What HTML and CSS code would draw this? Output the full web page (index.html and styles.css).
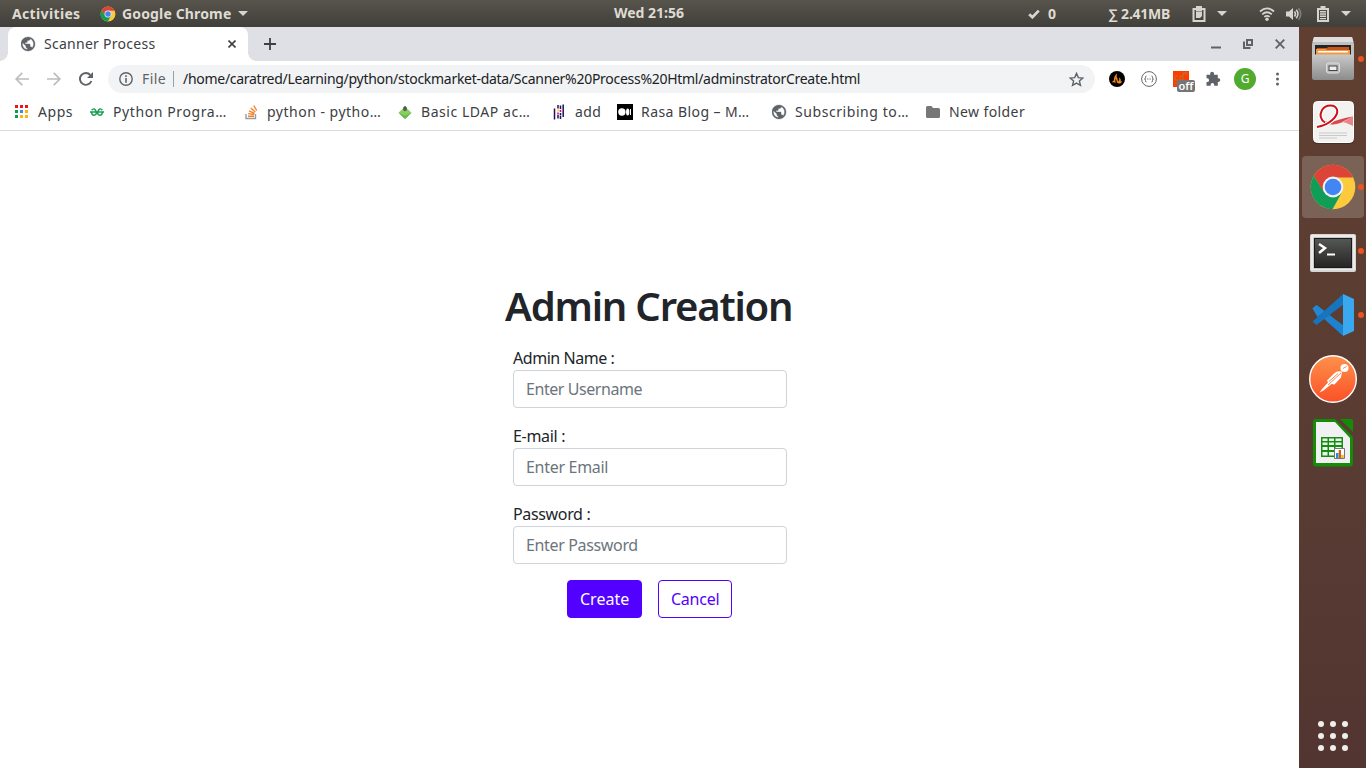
FILE: index.html
```html
<!DOCTYPE html>
<html lang="en">
<head>
<meta charset="utf-8">
<title>Scanner Process</title>
<link rel="stylesheet" href="styles.css">
</head>
<body>
<header class="topbar">
  <div class="top-left">
    <span class="t t-activities">Activities</span>
    <svg class="chrome-small" viewBox="0 0 48 48"><use href="#chrome"/></svg>
    <span class="t t-app">Google Chrome</span>
    <svg class="caret" viewBox="0 0 10 5"><path d="M0 0h10L5 5z"/></svg>
  </div>
  <span class="t t-clock">Wed 21:56</span>
  <div class="top-right">
    <svg class="i-check" viewBox="0 0 12 10"><path d="M1.200 5.200l3.200 3L10.800 1.600" fill="none" stroke="#d6d4cf" stroke-width="2.800"/></svg>
    <span class="t t-zero">0</span>
    <span class="t t-net">∑ 2.41MB</span>
    <svg class="i-clip" viewBox="0 0 14 16"><path fill-rule="evenodd" d="M4 0h6v2h3.500v14H.5V2H4zM2.500 4v10h9V4H10v1.500H4V4z"/><path d="M4 6h6v4L8 12H4z"/></svg>
    <svg class="caret c2" viewBox="0 0 10 5"><path d="M0 0h10L5 5z"/></svg>
    <svg class="i-wifi" viewBox="0 0 16 14"><g fill="none" stroke="#d6d4cf" stroke-width="1.700"><path d="M1 4.500Q8-1.700 15 4.500M3.200 7.300Q8 3.200 12.800 7.300M5.300 9.900Q8 7.700 10.700 9.900"/></g><circle cx="8" cy="12.200" r="1.700"/></svg>
    <svg class="i-vol" viewBox="0 0 16 14"><path d="M0 4.500h3L7 1v12L3 9.500H0z"/><g fill="none" stroke="#d6d4cf" stroke-width="1.500"><path d="M8.500 4.500q2 2.500 0 5M10.300 2.800q3.300 4.200 0 8.400"/><path d="M12.500 1.200q4.500 5.800 0 11.600" opacity=".4"/></g></svg>
    <svg class="i-bat" viewBox="0 0 12 16"><path fill-rule="evenodd" d="M3.500 0h5v2H12v14H0V2h3.500zM2 4v10h8V4z"/><path d="M3 5h6v1.500H3zM3 7.300h6v1.500H3zM3 9.600h6v1.500H3zM3 11.900h6v1.300H3z"/></svg>
    <svg class="caret c3" viewBox="0 0 10 5"><path d="M0 0h10L5 5z"/></svg>
  </div>
</header>
<div class="desktop">
  <main class="window">
    <div class="tabs">
      <div class="tab">
        <svg class="globe" viewBox="0 0 16 16"><use href="#globe"/></svg>
        <span class="t t-tab">Scanner Process</span>
        <svg class="tab-x" viewBox="0 0 8 8"><path d="M.5.5l7 7m0-7l-7 7" fill="none" stroke="#3c4043" stroke-width="1.600"/></svg>
      </div>
      <svg class="plus" viewBox="0 0 12 12"><path d="M6 0v12M0 6h12" stroke="#3c4043" stroke-width="1.800"/></svg>
      <div class="controls">
        <svg class="w-min" viewBox="0 0 10 10"><path d="M0 7.500h10v2H0z" fill="#5f6368"/></svg>
        <svg class="w-max" viewBox="0 0 10 10"><path d="M4 1h5v5H4zM1 2.500V9h6.500" fill="none" stroke="#5f6368" stroke-width="2"/></svg>
        <svg class="w-close" viewBox="0 0 10 10"><path d="M.7.7l8.600 8.600m0-8.600L.7 9.300" fill="none" stroke="#5f6368" stroke-width="1.900"/></svg>
      </div>
    </div>
    <div class="toolbar">
      <svg class="nav" viewBox="0 0 14 14"><path d="M14 7H1.500M7.300.8L1.100 7l6.200 6.200" fill="none" stroke="#babcbe" stroke-width="1.700"/></svg>
      <svg class="nav n2" viewBox="0 0 14 14"><path d="M0 7h12.500M6.700.8L12.900 7l-6.200 6.200" fill="none" stroke="#babcbe" stroke-width="1.700"/></svg>
      <svg class="nav n3" viewBox="0 0 14 14"><path d="M12.400 9A5.900 5.900 0 1 1 11.300 3" fill="none" stroke="#5f6368" stroke-width="1.900"/><path d="M14 0v6H8z" fill="#5f6368"/></svg>
      <div class="omnibox">
        <svg class="info" viewBox="0 0 14 14"><circle cx="7" cy="7" r="6.200" fill="none" stroke="#5f6368" stroke-width="1.400"/><path d="M6.200 3.300h1.600v1.600H6.200zM6.200 6h1.600v4.700H6.200z" fill="#5f6368"/></svg>
        <span class="t t-file">File</span>
        <span class="sep"></span>
        <span class="t t-url">/home/caratred/Learning/python/stockmarket-data/Scanner%20Process%20Html/adminstratorCreate.html</span>
        <svg class="star" viewBox="0 0 14 14"><path d="M7 1.300l1.700 3.900 4.200.4-3.200 2.800 1 4.100L7 10.300l-3.700 2.200 1-4.100L1.100 5.600l4.200-.4z" fill="none" stroke="#5f6368" stroke-width="1.300"/></svg>
      </div>
      <div class="exts">
        <svg viewBox="0 0 16 16"><circle cx="8" cy="8" r="8"/><path d="M3 11.500Q4 9 5 9.500 4.500 5.500 8 2.500 7 6 8.500 7.500L9 10.500Q11 9 10 6.500 12.500 8 11.500 10.500L13 10Q12.500 13 10 12.500 7.500 12.500 7.500 9.500 6.800 8 7 7 5.800 9 6.500 12.500 5.500 10.500 3 11.500z" fill="#f08a1d"/></svg>
        <svg viewBox="0 0 16 16"><circle cx="8" cy="8" r="7.400" fill="#fff" stroke="#666" stroke-width="1"/><path d="M5.500 5Q4.300 5 4.500 6.500T3.500 8q1.200 0 1 1.500T5.500 11M10.500 5q1.200 0 1 1.500t1 1.500q-1.200 0-1 1.500t-1 1.500" fill="none" stroke="#666"/><path d="M6 8h.9M7.600 8h.9M9.200 8h.8" stroke="#666"/></svg>
        <div class="ext-cdn">
          <svg viewBox="0 0 16 16"><path d="M0 0h16v16H0z" fill="#ff3b05"/><path d="M5 5H2v4h3M10 2v7H7V5h3M10.700 4V1.500h1.600V4M12.300 1.500H14V4M1 12h3" fill="none" stroke="#b87528"/></svg>
          <span class="badge">off</span>
        </div>
        <svg viewBox="0 0 16 16"><path d="M1.500 3.700h3.700V2.600a1.900 1.900 0 0 1 3.800 0v1.100h3.800v3.600h.7a1.800 1.800 0 0 1 0 3.600h-.7v3.800H9.200v-.8a1.800 1.800 0 0 0-3.600 0v.8H1.500V11h.7a1.800 1.800 0 0 0 0-3.700h-.7z" fill="#5f6368"/></svg>
        <span class="avatar">G</span>
        <svg viewBox="0 0 16 16" fill="#5f6368"><circle cx="8.500" cy="3" r="1.500"/><circle cx="8.500" cy="8" r="1.500"/><circle cx="8.500" cy="13" r="1.500"/></svg>
      </div>
    </div>
    <nav class="bookmarks">
      <div class="bm"><svg viewBox="0 0 16 16"><g fill="#f01414"><path d="M0 1h3v3H0zM5 1h3v3H5zM10 1h3v3h-3z"/></g><path d="M0 6h3v3H0zM0 11h3v3H0z" fill="#0aa04a"/><path d="M5 6h3v3H5z" fill="#4285f4"/><path d="M10 6h3v3h-3zM5 11h3v3H5zM10 11h3v3h-3z" fill="#fbb609"/></svg><span class="t b1">Apps</span></div>
      <div class="bm"><svg viewBox="0 0 16 16"><path d="M1.600 6.200Q4.300 3 6.300 7.800M12.400 6.200Q9.700 3 7.700 7.800M0 8h14M1.500 8.500Q2.200 11.400 4.200 11.200 6.300 11 6.400 8.500M12.500 8.500Q11.800 11.400 9.800 11.200 7.700 11 7.600 8.500" fill="none" stroke="#1b9e52" stroke-width="1.400"/></svg><span class="t b2">Python Progra…</span></div>
      <div class="bm"><svg viewBox="0 0 16 16"><path d="M2 10v4.500h9.500V10" fill="none" stroke="#9a9c9f" stroke-width="1.400"/><path d="M4 12.300h6M4.200 9.600l6 .9M5 6.800l5.500 2.500M6.800 4l4.500 4M9.700 1.500L12.800 6.500" stroke="#f48024" stroke-width="1.400"/></svg><span class="t b3">python - pytho…</span></div>
      <div class="bm"><svg viewBox="0 0 16 16"><path d="M7 2.500L.5 8.700 7 15l6.500-6.300z" fill="#86d060"/><path d="M.5 8.700L7 15l6.500-6.300-6.500 3z" fill="#69b64b"/><path d="M5.200 3.500q1.800-3 3.600 0v2.800L7 7.300l-1.800-1z" fill="#555b50"/></svg><span class="t b4">Basic LDAP ac…</span></div>
      <div class="bm"><svg viewBox="0 0 16 16"><path d="M2.500 4.500v11M6 1v3.500M6 11v3.500M8.500 1.500V5M8.500 11.500V15M11.200.5V13" stroke="#20115b" stroke-width="1.500" fill="none"/><path d="M5.200 5.500h1.600v2H5.200z" fill="#ffca00"/><path d="M5.200 8.500h1.600v2H5.200zM7.700 6h1.600v2H7.700z" fill="#e70488"/><path d="M7.700 9h1.600v2H7.700z" fill="#20115b"/></svg><span class="t b5">add</span></div>
      <div class="bm med"><svg viewBox="0 0 16 16"><path d="M0 0h16v16H0z"/><circle cx="4.900" cy="8" r="3.700" fill="#fff"/><ellipse cx="10.700" cy="8" rx="1.700" ry="3.500" fill="#fff"/><path d="M13 5h1v6h-1z" fill="#fff"/></svg><span class="t b6">Rasa Blog – M…</span></div>
      <div class="bm"><svg viewBox="0 0 16 16"><use href="#globe"/></svg><span class="t b7">Subscribing to…</span></div>
      <div class="bm"><svg viewBox="0 0 16 16"><path d="M0 3.500Q0 2 1.500 2h4l1.500 2h5.500Q14 4 14 5.500v7q0 1.500-1.500 1.500h-11Q0 14 0 12.500z" fill="#757779"/></svg><span class="t b8">New folder</span></div>
    </nav>
    <section class="page">
      <form class="form">
        <h1 class="t t-h1">Admin Creation</h1>
        <label class="lab"><span class="t l1">Admin Name :</span><span class="field"><span class="t p1">Enter Username</span></span></label>
        <label class="lab"><span class="t l2">E-mail :</span><span class="field"><span class="t p2">Enter Email</span></span></label>
        <label class="lab"><span class="t l3">Password :</span><span class="field"><span class="t p3">Enter Password</span></span></label>
        <div class="buttons">
          <button type="button" class="btn primary"><span class="t k1">Create</span></button>
          <button type="button" class="btn outline"><span class="t k2">Cancel</span></button>
        </div>
      </form>
    </section>
  </main>
  <aside class="dock">
    <div class="tile run">
      <svg viewBox="0 0 48 48"><defs><linearGradient id="gm" x2="0" y2="1"><stop stop-color="#c9c9c9"/><stop offset="1" stop-color="#8c8c8c"/></linearGradient></defs><path d="M5 2h38l2 7v21H3V9z" fill="#c0c0c0"/><path d="M5 2h38l1.500 5h-41z" fill="#dedede"/><path d="M6 10h36v12H6z" fill="#242424"/><path d="M8 13h10l1-1h21v8H8z" fill="#c8541b"/><path d="M7 14h10l1 1h23v7H7z" fill="#ee9a43"/><path d="M9 16h30v1.500H9z" fill="#fff"/><path d="M5 19.500h38l2 1v22q0 2.500-2.500 2.500h-37Q3 45 3 42.500v-22z" fill="url(#gm)"/><rect x="17.500" y="28" width="13" height="10" rx="2" fill="#bdbdbd" stroke="#ddd"/><rect x="20" y="31" width="8" height="4.500" fill="#eee" stroke="#444"/></svg>
    </div>
    <div class="tile">
      <svg viewBox="0 0 48 48"><rect x="4" y="4" width="41" height="41" rx="4" fill="#3b2720" opacity=".6"/><rect x="4.500" y="2.500" width="40" height="41" rx="4" fill="#f2f2f1" stroke="#fff"/><path d="M44 17.500Q38 21 33 23.500 24 27.500 16 24L14 20Q20 26.500 29 22 37 23 44 27z" fill="#e98588"/><path d="M44 17.500Q38 20.500 33 23 24 27 16 23.500L14 20Q20 25 29 21 38 18 44 17.500z" fill="#d9474b"/><path d="M8 28C20 26 30 17 28 10.500 26 5 17 5 13 11q-4 8 3 12.500" fill="none" stroke="#fff" stroke-width="4.500"/><path d="M8 28C20 26 30 17 28 10.500 26 5 17 5 13 11q-4 8 3 12.500" fill="none" stroke="#cc1118" stroke-width="2"/><path d="M10 34h28M10 36.500h28M10 39h18" stroke="#c9c9c9"/></svg>
    </div>
    <div class="tile run active">
      <svg viewBox="0 0 48 48"><g id="chrome"><circle cx="24" cy="24" r="22.300" fill="#fdca3e"/><path d="M4.700 12.850A22.300 22.300 0 0 1 43.300 12.850L44 14.500H24L14.500 29z" fill="#dc4437"/><path d="M4.700 12.850A22.300 22.300 0 0 0 23.500 46.300L32.500 30 14.500 28.500z" fill="#109d58"/><circle cx="24" cy="24" r="10.400" fill="#f1f1f1"/><circle cx="24" cy="24" r="8.300" fill="#4285f4"/></g></svg>
    </div>
    <div class="tile run">
      <svg viewBox="0 0 48 48"><defs><linearGradient id="gt" x2="0" y2="1"><stop stop-color="#555753"/><stop offset="1" stop-color="#252525"/></linearGradient></defs><rect x="1" y="7" width="46" height="38" rx="2" fill="#d6d6d5"/><rect x="2" y="8" width="44" height="35" rx="1" fill="#ecebea"/><rect x="4.500" y="10.500" width="39" height="31" fill="#a5a5a4"/><rect x="5" y="11" width="38" height="30" fill="#1a1a1a"/><rect x="6" y="12" width="36" height="28" fill="url(#gt)"/><path d="M10 17l6 4-6 5" fill="none" stroke="#fff" stroke-width="2.500"/><path d="M18 27.500h8" stroke="#fff" stroke-width="2"/></svg>
    </div>
    <div class="tile run">
      <svg viewBox="0 0 48 48"><path d="M3.500 17.500l4-3.500L35 35v9.500L33 44z" fill="#1d82cf"/><path d="M3.500 30.500L7.500 34 35 13V3.500L33 4z" fill="#1874bd"/><path d="M3.500 17.500l4-3.500 7.500 6-6.500 6z" fill="#2088d4"/><path d="M34 3l11 5v32l-11 5z" fill="#3aa8ee"/></svg>
    </div>
    <div class="tile">
      <svg viewBox="0 0 48 48"><defs><linearGradient id="gp" x2="0" y2="1"><stop stop-color="#ff914b"/><stop offset="1" stop-color="#fb5127"/></linearGradient></defs><circle cx="24" cy="24" r="23.300" fill="url(#gp)" stroke="#fff" stroke-width="1.400"/><circle cx="35.500" cy="13" r="4" fill="#fff"/><path d="M33 16.500q-5-1-8 2L18 25.500l1 2L13.500 33.500l-3 4 4-2L22.500 29l3 .5L32 22.500z" fill="#fff"/><path d="M32 18L19 30M29 18.500l-9 8M34 13.500l3.500-2" stroke="#f67a44" stroke-width=".9" fill="none"/></svg>
    </div>
    <div class="tile">
      <svg viewBox="0 0 48 48"><path d="M7 0h19l18 18v26q0 3.500-3.500 3.500H7Q4 47.500 4 44V3q0-3 3-3z" fill="#158c07"/><path d="M7 3h19l15 16v25H7z" fill="#f1f1f3"/><path d="M31 0h11q2 0 2 2v11z" fill="#158c07"/><path d="M12 18h22v20H12z" fill="#168c12"/><g fill="#eaf7e8"><path d="M13.500 19.500h5v2.500h-5zM20 19.500h5v2.500h-5zM26.500 19.500h6v2.500h-6zM13.500 23.500h5V26h-5zM20 23.500h5V26h-5zM26.500 23.500h6V26h-6zM13.500 28h5v3h-5zM20 28h5v3h-5zM26.500 28h6v3h-6zM13.500 33h5v3.500h-5zM20 33h5v3.500h-5z"/></g><path d="M25.500 29.500h10v10h-10z" fill="#fff" stroke="#777"/><path d="M27 34h2.500v5H27z" fill="#1496d4"/><path d="M29.700 31h2.300v8h-2.300z" fill="#d35b16"/><path d="M32.200 36h2.500v3h-2.500z" fill="#f0b323"/></svg>
    </div>
    <svg class="appgrid" viewBox="0 0 30 30" fill="#eeeeec"><circle cx="3" cy="3" r="3"/><circle cx="15" cy="3" r="3"/><circle cx="27" cy="3" r="3"/><circle cx="3" cy="15" r="3"/><circle cx="15" cy="15" r="3"/><circle cx="27" cy="15" r="3"/><circle cx="3" cy="27" r="3"/><circle cx="15" cy="27" r="3"/><circle cx="27" cy="27" r="3"/></svg>
  </aside>
</div>
<svg width="0" height="0" class="defs"><defs><g id="globe"><path transform="translate(-1.400 -.4) scale(.7)" fill="#5f6368" stroke="#5f6368" stroke-width=".5" d="M12 2C6.480 2 2 6.480 2 12s4.480 10 10 10 10-4.480 10-10S17.520 2 12 2zm-1 17.930c-3.950-.49-7-3.850-7-7.930 0-.62.080-1.210.210-1.790L9 15v1c0 1.100.9 2 2 2v1.930zm6.900-2.540c-.26-.81-1-1.390-1.900-1.390h-1v-3c0-.55-.45-1-1-1H8v-2h2c.55 0 1-.45 1-1V7h2c1.100 0 2-.9 2-2v-.41c2.930 1.190 5 4.060 5 7.410 0 2.080-.8 3.970-2.100 5.390z"/></g></defs></svg>
</body>
</html>
```
FILE: styles.css
```css
* { box-sizing: border-box; }
body { margin: 0; width: 1366px; height: 768px; overflow: hidden; font-family: "Noto Sans", sans-serif; background: #fff; }
svg { display: block; flex: none; }
.defs { position: absolute; }
.t { white-space: nowrap; flex: none; display: block; }

.topbar { height: 27px; display: grid; grid-template-columns: 614px 72px 1fr; align-items: center; background: linear-gradient(#57544c, #403f3a); color: #dfdbd2; font-size: 14px; font-weight: 700; line-height: 26px; }
.topbar svg { fill: #d6d4cf; }
.top-left, .top-right { display: flex; align-items: center; height: 27px; }
.t-activities { margin-left: 12px; width: 68px; letter-spacing: .35px; }
.chrome-small { width: 16px; height: 16px; margin-left: 20px; }
.t-app { margin-left: 6px; width: 111px; letter-spacing: .15px; }
.t-clock { margin-top: -1px; }
.caret { width: 10px; height: 5px; margin-left: 5px; }
.i-check { width: 12px; height: 10px; margin-left: 342px; }
.t-zero { margin-left: 8px; width: 9px; }
.t-net { margin-left: 51px; width: 64px; letter-spacing: -.25px; }
.i-clip { width: 14px; height: 16px; margin-left: 20px; }
.c2 { margin-left: 11px; }
.i-wifi { width: 16px; height: 14px; margin-left: 32px; }
.i-vol { width: 16px; height: 14px; margin-left: 11px; }
.i-bat { width: 12px; height: 16px; margin-left: 15px; }
.c3 { margin-left: 12px; }

.desktop { display: flex; height: 741px; }
.window { width: 1299px; display: flex; flex-direction: column; }
.tabs { height: 34px; background: #dee0e6; display: flex; align-items: center; padding-left: 8px; }
.tab { position: relative; width: 240px; height: 34px; background: #fff; border-radius: 8px 8px 0 0; display: flex; align-items: center; padding-left: 13px; font-size: 14px; color: #3c4043; }
.tab::before, .tab::after { content: ""; position: absolute; bottom: 0; width: 8px; height: 8px; }
.tab::before { left: -8px; background: radial-gradient(circle at 0 0, transparent 7.5px, #fff 8px); }
.tab::after { right: -8px; background: radial-gradient(circle at 100% 0, transparent 7.5px, #fff 8px); }
.globe { width: 16px; height: 16px; }
.t-tab { margin: -2px 0 0 7px; width: 111px; letter-spacing: .27px; }
.tab-x { width: 8px; height: 8px; margin-left: 73px; }
.plus { width: 12px; height: 12px; margin-left: 16px; }
.controls { margin-left: auto; display: flex; gap: 22px; padding-right: 14px; }
.controls svg { width: 10px; height: 10px; }

.toolbar { height: 36px; display: flex; align-items: center; padding-left: 15px; }
.nav { width: 14px; height: 14px; }
.n2 { margin-left: 18px; }
.n3 { margin-left: 18px; }
.omnibox { width: 987px; height: 28px; margin-left: 15px; border-radius: 14px; background: #f1f3f4; display: flex; align-items: center; padding-left: 11px; font-size: 14px; line-height: 19px; color: #202124; }
.info { width: 14px; height: 14px; }
.t-file { margin: -1px 0 0 9px; width: 24px; color: #5f6368; letter-spacing: .4px; }
.sep { width: 1px; height: 16px; background: #9aa0a6; margin-left: 7px; }
.t-url { margin: -1px 0 0 9px; width: 677px; letter-spacing: -.284px; }
.star { width: 15px; height: 15px; margin-left: 209px; }
.exts { display: flex; align-items: center; margin-left: 14px; gap: 16px; }
.exts svg { width: 16px; height: 16px; }
.ext-cdn { position: relative; }
.badge { position: absolute; left: 4px; top: 9px; width: 18px; height: 12px; background: #757575; border-radius: 2px; color: #fff; font-size: 11px; font-weight: 600; line-height: 11px; text-align: center; }
.avatar { width: 22px; height: 22px; margin: 0 -3px; border-radius: 50%; background: #51ab2f; color: #fff; font-size: 12px; line-height: 22px; text-align: center; }

.bookmarks { height: 34px; padding: 0 0 3px 15px; border-bottom: 1px solid #dadce0; display: flex; align-items: center; gap: 17px; font-size: 14px; color: #3c4043; }
.bm { display: flex; align-items: center; gap: 7px; }
.bm svg { width: 16px; height: 16px; }
.bm .t { margin-top: -2px; }
.med { margin-left: -1px; gap: 8px; }
.b1 { width: 35px; letter-spacing: .55px; }
.b2, .b3, .b4, .b6, .b7 { width: 114px; }
.b2 { letter-spacing: .6px; }
.b3 { letter-spacing: .5px; }
.b4 { letter-spacing: .55px; }
.b5 { width: 26px; letter-spacing: .35px; }
.b6 { letter-spacing: .43px; }
.b7 { letter-spacing: .57px; }
.b8 { width: 76px; letter-spacing: .4px; }

.page { flex: 1; }
.form { width: 290px; margin: 151px 0 0 505px; font-size: 16px; line-height: 24px; color: #212529; }
.t-h1 { margin: 0 0 16px; font-size: 40px; font-weight: 600; line-height: 48px; letter-spacing: -1.2px; }
.lab { display: block; margin: 0 8px 16px; }
.l1 { letter-spacing: -.45px; }
.l2, .p2 { letter-spacing: -.3px; }
.l3, .p3 { letter-spacing: -.35px; }
.p1 { letter-spacing: -.43px; }
.k2 { letter-spacing: -.25px; }
.field { display: flex; height: 38px; border: 1px solid #ced4da; border-radius: 4px; padding: 6px 12px; color: #6c757d; }
.buttons { display: flex; gap: 16px; margin-left: 62px; }
.btn { height: 38px; border: 1px solid #5200ff; border-radius: 4px; padding: 0 12px; font: inherit; background: #fff; color: #5200ff; }
.primary { width: 75px; background: #5200ff; color: #fff; }
.outline { width: 74px; }

.dock { width: 67px; padding: 1px 2px 0 3px; background: linear-gradient(#603f30, #583b33 65%, #523530); display: flex; flex-direction: column; gap: 2px; }
.tile { position: relative; width: 62px; height: 62px; border-radius: 4px; display: flex; align-items: center; justify-content: center; }
.tile svg { width: 48px; height: 48px; }
.active { background: #7b6256; }
.run::after { content: ""; position: absolute; right: 0; top: 28px; width: 6px; height: 6px; border-radius: 50%; background: #e95420; }
.appgrid { width: 30px; height: 30px; margin: auto auto 17px 16px; }
```
